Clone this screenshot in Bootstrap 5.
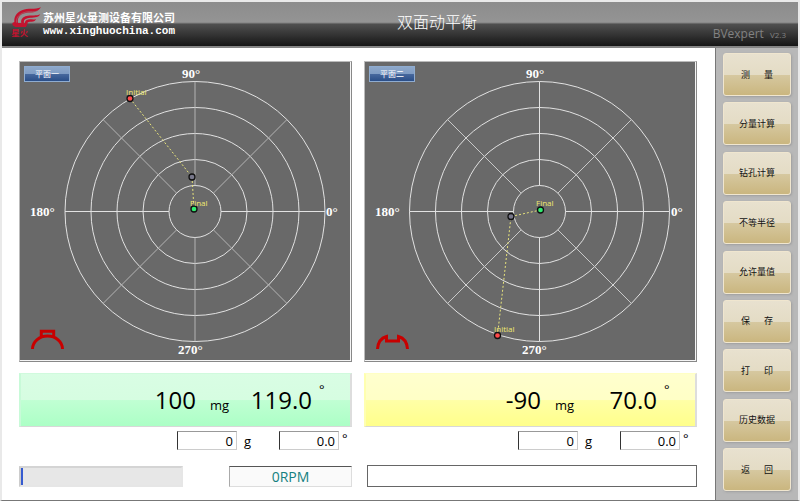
<!DOCTYPE html>
<html lang="zh-CN">
<head>
<meta charset="utf-8">
<meta name="viewport" content="width=device-width, initial-scale=1">
<title>双面动平衡</title>
<link href="https://cdn.jsdelivr.net/npm/bootstrap@5.3.0/dist/css/bootstrap.min.css" rel="stylesheet">
<style>
  body { font-family: "Open Sans", "Noto Sans CJK SC", sans-serif; font-size: 13px; line-height: 18px; color: #000; background: #fff;
    border: 2px solid #e9e9e9; border-bottom: 1px solid #777; }
  .top-bar { height: 46px; border-bottom: 2px solid #858585; color: #fff;
    background: linear-gradient(#8c8c8c 0, #949494 20px, #808080 21px, #505050 22px, #161616 44px); }
  .top-side { flex: 1 1 0; }
  .brand-name { font-size: 11px; line-height: 15px; font-weight: 700; }
  .brand-url { font: 700 11px/12px "Liberation Mono", monospace; color: #fff; }
  .page-title { font-size: 16px; line-height: 24px; font-weight: 300; margin: 8px 0 0 76px; }
  .top-end { margin-left: -10px; }
  .product { font-size: 12px; line-height: 16px; color: #828282; padding: 0 12px 3px 0; }
  .product small { font-size: 8px; margin-left: 3px; }
  .work { padding: 13px 18px 12px 17px; }
  .planes { display: grid; grid-template-columns: 1fr 1fr; column-gap: 12px; }
  .polar { background: #696969; border: 1px solid; border-color: #bbb #888 #888 #bbb; box-shadow: inset -1px -1px #f4f4f4; }
  .polar svg { width: 100%; height: auto; }
  .plane-tag { top: 4px; left: 4px; width: 46px; height: 16px; padding: 0; border: 1px solid #8facd0; border-radius: 0; color: #fff; font-size: 8px; line-height: 14px;
    background: linear-gradient(#8ea8ca 0, #7f9cc4 50%, #47689d 51%, #2a4e88); }
  .axis { font: 700 13px "Liberation Serif", serif; fill: #fff; }
  .point { font: 8px "Open Sans", sans-serif; fill: #f0ea70; }
  .reading { margin-top: 11px; height: 54px; border: solid #ddd; border-width: 1px 2px; border-bottom-color: #d8d8d8; }
  .reading-green { background: linear-gradient(#d9fde4 0, #d6fde1 50%, #c0ffd3 51%, #acffc6); border-top-color: #d0fadd; border-left-color: #c8fad8; }
  .reading-yellow { background: linear-gradient(#ffffce 0, #ffffc6 50%, #ffffa6 51%, #ffff8b); border-top-color: #ffffc4; border-left-color: #ffffb0; }
  .value { font-size: 24px; line-height: 52px; }
  .value-mg { width: 50px; padding: 10px 0 0 14px; }
  .value-angle { width: 66px; }
  .value-deg { width: 38px; padding: 6px 0 0 7px; }
  .trial { margin-top: 4px; }
  .trial input { width: 60px; height: 19px; padding: 0 3px; font-size: 13px; line-height: 17px; text-align: right; color: #000; border: 1px solid; border-color: #999 #ccc #ccc #333; border-radius: 0; }
  .unit-g { width: 42px; padding: 1px 0 0 7px; }
  .unit-deg { width: 13px; padding-left: 3px; line-height: 14px; }
  .status { margin-top: 15px; }
  .run-progress { width: 164px; height: 21px; border: 2px solid; border-color: #d4d4d4 #e6e6e6 #e6e6e6 #ccc; border-radius: 0; background: #e7e7e7; }
  .run-progress .progress-bar { background: #365bd0; }
  .rpm { width: 123px; height: 21px; font-size: 14px; line-height: 19px; color: #148080; background: #fafafa; border: 1px solid; border-color: #555 #ddd #ddd #aaa; }
  .message { height: 22px; margin-left: 3px; padding: 0 3px; font-size: 13px; border: 1px solid #666; border-radius: 0; }
  .side { width: 83px; flex: none; background: #b8b8b8; border-left: 1px solid #777; padding: 5px 7px 9px; }
  .side .btn { height: 43px; padding: 0; font-size: 9px; line-height: 12px; color: #111; white-space: pre; border: 1px solid #f0e6cf; border-radius: 3px;
    background: linear-gradient(#e8e1cf 0, #e4dcc5 50%, #d6c8a0 51%, #cab67f); box-shadow: 1px 1px 2px #8888; }
</style>
<script src="https://cdn.jsdelivr.net/npm/bootstrap@5.3.0/dist/js/bootstrap.bundle.min.js"></script>
</head>
<body class="min-vh-100 d-flex flex-column">
<header class="top-bar d-flex">
  <div class="top-side d-flex pt-1">
    <svg class="ms-2" width="33" height="33" viewBox="30 18 99 99" aria-hidden="true">
      <g fill="#c4122f">
        <path d="M123 22C104 30 84 23 66 31C48 39 42 51 43 66L37 69L38 76L46 81H78L83 70L54 69C51 54 59 44 74 40C91 35 111 42 123 22Z"/>
        <path d="M121 43C107 50 89 43 76 49C65 54 62 61 64 69H72C70 60 76 56 86 54C99 52 114 55 121 43Z"/>
        <path d="M108 57C99 61 89 55 80 60C75 63 74 66 75 72L82 71C82 65 88 65 95 65C102 65 107 62 108 57Z"/>
      </g>
      <path d="M50 68C47 51 60 40 79 36C91 34 104 37 113 33" fill="none" stroke="#8e8e8e" stroke-width="1.500"/>
      <text x="34" y="107" font-size="25" font-weight="700" fill="#c4122f" font-family="Noto Sans CJK SC, sans-serif">星火</text>
    </svg>
    <div class="pt-1">
      <div class="brand-name text-nowrap">苏州星火量测设备有限公司</div>
      <a class="brand-url d-block text-decoration-none" href="#">www.xinghuochina.com</a>
    </div>
  </div>
  <h1 class="page-title text-nowrap mb-0">双面动平衡</h1>
  <div class="top-side top-end product d-flex justify-content-end align-items-end"><div>BVexpert <small>V2.3</small></div></div>
</header>
<div class="d-flex flex-grow-1">
  <main class="work flex-grow-1">
    <div class="planes">
      <section>
        <div class="polar position-relative">
          <button type="button" class="btn plane-tag position-absolute">平面一</button>
          <svg class="d-block" viewBox="0 0 331 299" role="img" aria-label="平面一">
            <g fill="none" stroke="#e2e2e2">
              <circle cx="175" cy="149.5" r="26"/><circle cx="175" cy="149.5" r="52"/><circle cx="175" cy="149.5" r="78"/><circle cx="175" cy="149.5" r="104"/><circle cx="175" cy="149.5" r="130"/>
              <path d="M45 149.5H149M201 149.5H305"/>
              <path d="M175 19.5V123.5M175 175.5V279.5M83 57.5L156.500 131M193.500 168L267 241.500M267 57.500L193.500 131M156.500 168L83 241.500" stroke="#b4b4b4"/>
            </g>
            <g class="axis"><text x="162" y="16">90°</text><text x="10" y="154">180°</text><text x="306" y="154">0°</text><text x="158" y="292">270°</text></g>
            <path d="M110 36.500L172 115L174 147" fill="none" stroke="#e8e47c" stroke-dasharray="2 2"/>
            <g stroke="#111" stroke-width="1.300"><circle cx="110" cy="36.500" r="3" fill="#ff4a4a"/><circle cx="172" cy="115" r="3" fill="#77778a"/><circle cx="174" cy="147" r="3" fill="#30ee70"/></g>
            <g class="point"><text x="106" y="33">Initial</text><text x="170" y="144">Final</text></g>
            <path d="M12.500 287A15 13 0 0 1 42.500 287M21.300 276V269.300H33.700V276" fill="none" stroke="#c80000" stroke-width="3"/>
          </svg>
        </div>
        <div class="reading reading-green d-flex justify-content-end">
          <span class="value">100</span><span class="value-mg align-self-center">mg</span>
          <span class="value value-angle text-end">119.0</span><span class="value-deg">°</span>
        </div>
        <div class="trial d-flex justify-content-end">
          <input class="form-control" id="w1" value="0"><label class="unit-g" for="w1">g</label>
          <input class="form-control" id="a1" value="0.0"><label class="unit-deg" for="a1">°</label>
        </div>
      </section>
      <section>
        <div class="polar position-relative">
          <button type="button" class="btn plane-tag position-absolute">平面二</button>
          <svg class="d-block" viewBox="0 0 331 299" role="img" aria-label="平面二">
            <g fill="none" stroke="#e2e2e2">
              <circle cx="174.500" cy="149.500" r="26"/><circle cx="174.500" cy="149.500" r="52"/><circle cx="174.500" cy="149.500" r="78"/><circle cx="174.500" cy="149.500" r="104"/><circle cx="174.500" cy="149.500" r="130"/>
              <path d="M44.500 149.500H148.500M200.500 149.500H304.500M174.500 19.500V123.500M174.500 175.500V279.500"/>
              <path d="M82.500 57.500L156 131M193 168L266.500 241.500M266.500 57.500L193 131M156 168L82.500 241.500" stroke="#c8c8c8"/>
            </g>
            <g class="axis"><text x="161" y="16">90°</text><text x="10" y="154">180°</text><text x="306" y="154">0°</text><text x="157" y="292">270°</text></g>
            <path d="M132.500 273.500L146 154.500L175.500 148" fill="none" stroke="#e8e47c" stroke-dasharray="2 2"/>
            <g stroke="#111" stroke-width="1.300"><circle cx="132.500" cy="273.500" r="3" fill="#ff4a4a"/><circle cx="146" cy="154.500" r="3" fill="#77778a"/><circle cx="175.500" cy="148" r="3" fill="#30ee70"/></g>
            <g class="point"><text x="129" y="270">Initial</text><text x="171" y="144">Final</text></g>
            <path d="M12.500 287C13 280 16 276 21.500 274.500V279H33.500V274.500C39 276 42 280 42.500 287" fill="none" stroke="#c80000" stroke-width="3"/>
          </svg>
        </div>
        <div class="reading reading-yellow d-flex justify-content-end">
          <span class="value">-90</span><span class="value-mg align-self-center">mg</span>
          <span class="value value-angle text-end">70.0</span><span class="value-deg">°</span>
        </div>
        <div class="trial d-flex justify-content-end pe-1">
          <input class="form-control" id="w2" value="0"><label class="unit-g" for="w2">g</label>
          <input class="form-control" id="a2" value="0.0"><label class="unit-deg" for="a2">°</label>
        </div>
      </section>
    </div>
    <div class="planes status">
      <div class="d-flex justify-content-between align-items-end">
        <div class="progress run-progress" role="progressbar" aria-label="进度" aria-valuenow="1" aria-valuemin="0" aria-valuemax="100"><div class="progress-bar" style="width:1%"></div></div>
        <div class="rpm text-center">0RPM</div>
      </div>
      <div class="d-flex"><input class="form-control message" aria-label="消息"></div>
    </div>
  </main>
  <nav class="side d-flex flex-column justify-content-between">
    <button type="button" class="btn">测      量</button>
    <button type="button" class="btn">分量计算</button>
    <button type="button" class="btn">钻孔计算</button>
    <button type="button" class="btn">不等半径</button>
    <button type="button" class="btn">允许量值</button>
    <button type="button" class="btn">保      存</button>
    <button type="button" class="btn">打      印</button>
    <button type="button" class="btn">历史数据</button>
    <button type="button" class="btn">返      回</button>
  </nav>
</div>
</body>
</html>
